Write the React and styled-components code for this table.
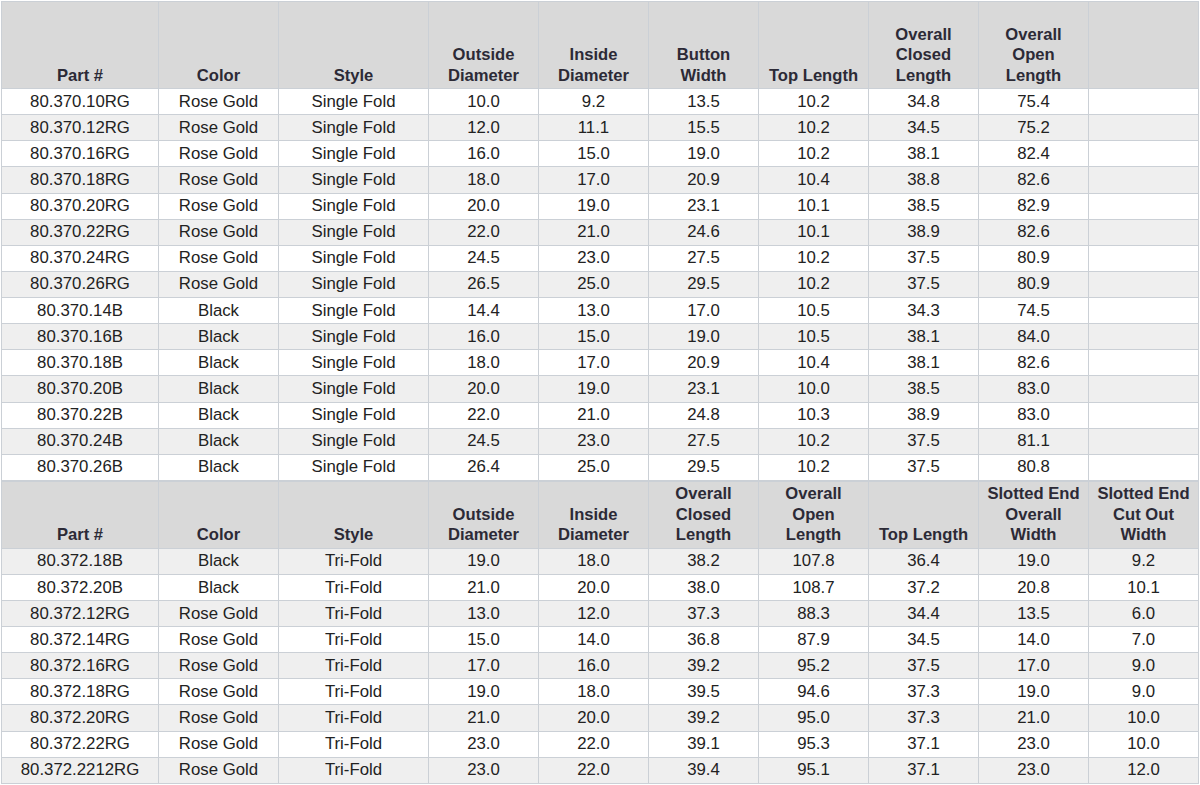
import React from "react";
import styled, { createGlobalStyle } from "styled-components";

const Global = createGlobalStyle`
  html, body { margin: 0; padding: 0; background: #ffffff; }
  body { font-family: "Liberation Sans", Arial, sans-serif; }
`;

const COLS = "157px 120px 150px 110px 110px 110px 110px 110px 110px 110px";
const LINE = "#cbd0d6";

const Page = styled.div`
  padding: 1px 0 0 1px;
`;

const Sheet = styled.div`
  width: 1197px;
  border-left: 1px solid ${LINE};
  border-top: 1px solid ${LINE};
`;

const Row = styled.div`
  box-sizing: border-box;
  display: grid;
  grid-template-columns: ${COLS};
  height: ${(p) => p.$h}px;
  background: ${(p) => p.$bg};
  border-top: ${(p) => (p.$sep ? `1px solid ${LINE}` : "none")};
`;

const Cell = styled.div`
  box-sizing: border-box;
  border-right: 1px solid ${LINE};
  border-bottom: 1px solid ${LINE};
  display: flex;
  align-items: center;
  justify-content: center;
  font-size: 16.8px;
  color: #222222;
  white-space: nowrap;
  overflow: hidden;
`;

const HeadCell = styled(Cell)`
  align-items: flex-end;
  text-align: center;
  font-size: 16.6px;
  font-weight: bold;
  color: #2c2a36;
  line-height: 20.5px;
  padding-bottom: 2px;
  white-space: normal;
`;

const H1 = [
  "Part #",
  "Color",
  "Style",
  "Outside\nDiameter",
  "Inside\nDiameter",
  "Button\nWidth",
  "Top Length",
  "Overall\nClosed\nLength",
  "Overall\nOpen\nLength",
  "",
];

const D1 = [
  ["80.370.10RG", "Rose Gold", "Single Fold", "10.0", "9.2", "13.5", "10.2", "34.8", "75.4", ""],
  ["80.370.12RG", "Rose Gold", "Single Fold", "12.0", "11.1", "15.5", "10.2", "34.5", "75.2", ""],
  ["80.370.16RG", "Rose Gold", "Single Fold", "16.0", "15.0", "19.0", "10.2", "38.1", "82.4", ""],
  ["80.370.18RG", "Rose Gold", "Single Fold", "18.0", "17.0", "20.9", "10.4", "38.8", "82.6", ""],
  ["80.370.20RG", "Rose Gold", "Single Fold", "20.0", "19.0", "23.1", "10.1", "38.5", "82.9", ""],
  ["80.370.22RG", "Rose Gold", "Single Fold", "22.0", "21.0", "24.6", "10.1", "38.9", "82.6", ""],
  ["80.370.24RG", "Rose Gold", "Single Fold", "24.5", "23.0", "27.5", "10.2", "37.5", "80.9", ""],
  ["80.370.26RG", "Rose Gold", "Single Fold", "26.5", "25.0", "29.5", "10.2", "37.5", "80.9", ""],
  ["80.370.14B", "Black", "Single Fold", "14.4", "13.0", "17.0", "10.5", "34.3", "74.5", ""],
  ["80.370.16B", "Black", "Single Fold", "16.0", "15.0", "19.0", "10.5", "38.1", "84.0", ""],
  ["80.370.18B", "Black", "Single Fold", "18.0", "17.0", "20.9", "10.4", "38.1", "82.6", ""],
  ["80.370.20B", "Black", "Single Fold", "20.0", "19.0", "23.1", "10.0", "38.5", "83.0", ""],
  ["80.370.22B", "Black", "Single Fold", "22.0", "21.0", "24.8", "10.3", "38.9", "83.0", ""],
  ["80.370.24B", "Black", "Single Fold", "24.5", "23.0", "27.5", "10.2", "37.5", "81.1", ""],
  ["80.370.26B", "Black", "Single Fold", "26.4", "25.0", "29.5", "10.2", "37.5", "80.8", ""],
];

const H2 = [
  "Part #",
  "Color",
  "Style",
  "Outside\nDiameter",
  "Inside\nDiameter",
  "Overall\nClosed\nLength",
  "Overall\nOpen\nLength",
  "Top Length",
  "Slotted End\nOverall\nWidth",
  "Slotted End\nCut Out\nWidth",
];

const D2 = [
  ["80.372.18B", "Black", "Tri-Fold", "19.0", "18.0", "38.2", "107.8", "36.4", "19.0", "9.2"],
  ["80.372.20B", "Black", "Tri-Fold", "21.0", "20.0", "38.0", "108.7", "37.2", "20.8", "10.1"],
  ["80.372.12RG", "Rose Gold", "Tri-Fold", "13.0", "12.0", "37.3", "88.3", "34.4", "13.5", "6.0"],
  ["80.372.14RG", "Rose Gold", "Tri-Fold", "15.0", "14.0", "36.8", "87.9", "34.5", "14.0", "7.0"],
  ["80.372.16RG", "Rose Gold", "Tri-Fold", "17.0", "16.0", "39.2", "95.2", "37.5", "17.0", "9.0"],
  ["80.372.18RG", "Rose Gold", "Tri-Fold", "19.0", "18.0", "39.5", "94.6", "37.3", "19.0", "9.0"],
  ["80.372.20RG", "Rose Gold", "Tri-Fold", "21.0", "20.0", "39.2", "95.0", "37.3", "21.0", "10.0"],
  ["80.372.22RG", "Rose Gold", "Tri-Fold", "23.0", "22.0", "39.1", "95.3", "37.1", "23.0", "10.0"],
  ["80.372.2212RG", "Rose Gold", "Tri-Fold", "23.0", "22.0", "39.4", "95.1", "37.1", "23.0", "12.0"],
];

function Header({ labels, height, sep }) {
  return (
    <Row $h={height} $bg="#d9d9d9" $sep={sep}>
      {labels.map((l, i) => (
        <HeadCell key={i}>
          <span>
            {l.split("\n").map((part, j, arr) => (
              <React.Fragment key={j}>
                {part}
                {j < arr.length - 1 && <br />}
              </React.Fragment>
            ))}
          </span>
        </HeadCell>
      ))}
    </Row>
  );
}

function Body({ rows, firstGray, rowH }) {
  return rows.map((r, i) => {
    const gray = firstGray ? i % 2 === 0 : i % 2 === 1;
    return (
      <Row key={i} $h={rowH} $bg={gray ? "#efefef" : "#ffffff"}>
        {r.map((c, j) => (
          <Cell key={j}>{c}</Cell>
        ))}
      </Row>
    );
  });
}

export default function App() {
  return (
    <Page>
      <Global />
      <Sheet>
        <Header labels={H1} height={87} />
        <Body rows={D1} firstGray={false} rowH={26.13} />
        <Header labels={H2} height={68} sep />
        <Body rows={D2} firstGray={true} rowH={26.1} />
      </Sheet>
    </Page>
  );
}
